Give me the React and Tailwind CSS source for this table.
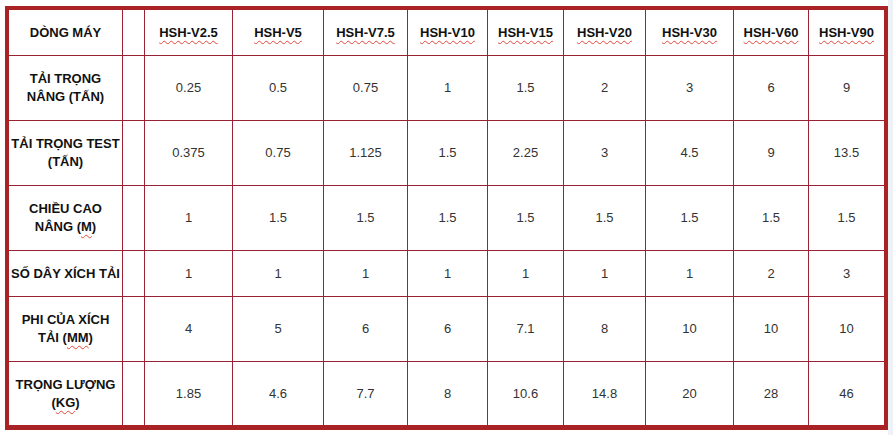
const models = ["HSH-V2.5", "HSH-V5", "HSH-V7.5", "HSH-V10", "HSH-V15", "HSH-V20", "HSH-V30", "HSH-V60", "HSH-V90"];

const Wavy = ({ children }) => (
  <span className="underline decoration-wavy decoration-[#e0453a] decoration-1 underline-offset-[3px]">
    {children}
  </span>
);

const rows = [
  {
    label: (
      <>
        TẢI TRỌNG
        <br />
        NÂNG (TẤN)
      </>
    ),
    values: ["0.25", "0.5", "0.75", "1", "1.5", "2", "3", "6", "9"],
  },
  {
    label: (
      <>
        TẢI TRỌNG TEST
        <br />
        (TẤN)
      </>
    ),
    values: ["0.375", "0.75", "1.125", "1.5", "2.25", "3", "4.5", "9", "13.5"],
  },
  {
    label: (
      <>
        CHIỀU CAO
        <br />
        NÂNG (<Wavy>M</Wavy>)
      </>
    ),
    values: ["1", "1.5", "1.5", "1.5", "1.5", "1.5", "1.5", "1.5", "1.5"],
  },
  {
    label: <span className="whitespace-nowrap">SỐ DÂY XÍCH TẢI</span>,
    values: ["1", "1", "1", "1", "1", "1", "1", "2", "3"],
  },
  {
    label: (
      <>
        PHI CỦA XÍCH
        <br />
        TẢI (<Wavy>MM</Wavy>)
      </>
    ),
    values: ["4", "5", "6", "6", "7.1", "8", "10", "10", "10"],
  },
  {
    label: (
      <>
        TRỌNG LƯỢNG
        <br />
        (<Wavy>KG</Wavy>)
      </>
    ),
    values: ["1.85", "4.6", "7.7", "8", "10.6", "14.8", "20", "28", "46"],
  },
];

const cell = "bg-white flex items-center justify-center text-center";

export default function App() {
  return (
    <div
      className="w-[893px] h-[435px] bg-white flex"
      style={{ fontFamily: '"Liberation Sans", Arial, sans-serif' }}
    >
      <div className="ml-[5px] mt-[6px] self-start border-[#a82226] border-l-4 border-t-4 border-r-4 border-b-[5px] bg-[#992234] grid gap-px grid-cols-[113px_21px_87px_90px_83px_79px_75px_81px_87px_74px_75px] grid-rows-[45px_64px_64px_64px_45px_64px_63px] text-[13px] leading-[18px]">
        <div className={`${cell} font-bold text-[#111]`}>DÒNG MÁY</div>
        <div className={cell}></div>
        {models.map((m) => (
          <div key={m} className={`${cell} font-bold text-[#111]`}>
            <Wavy>{m}</Wavy>
          </div>
        ))}
        {rows.map((r, i) => (
          <Row key={i} row={r} />
        ))}
      </div>
      <div className="flex-1 bg-[#eef2f6]"></div>
    </div>
  );
}

function Row({ row }) {
  return (
    <>
      <div className={`${cell} font-bold text-[#111]`}>
        <div>{row.label}</div>
      </div>
      <div className={cell}></div>
      {row.values.map((v, j) => (
        <div key={j} className={`${cell} text-[#333]`}>
          {v}
        </div>
      ))}
    </>
  );
}
